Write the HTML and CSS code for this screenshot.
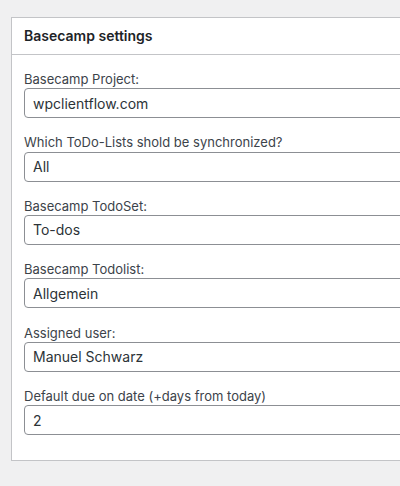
FILE: index.html
```html
<!DOCTYPE html>
<html lang="en">
<head>
<meta charset="utf-8">
<title>Basecamp settings</title>
<link rel="stylesheet" href="styles.css">
</head>
<body>
<div class="wrap">
  <div class="postbox">
    <div class="postbox-header">
      <h2 class="postbox-title">Basecamp settings</h2>
    </div>
    <div class="inside">
      <div class="field">
        <label class="field-label" for="f1">Basecamp Project:</label>
        <input class="field-input" id="f1" type="text" value="wpclientflow.com">
      </div>
      <div class="field">
        <label class="field-label" for="f2">Which ToDo-Lists shold be synchronized?</label>
        <input class="field-input" id="f2" type="text" value="All">
      </div>
      <div class="field">
        <label class="field-label" for="f3">Basecamp TodoSet:</label>
        <input class="field-input" id="f3" type="text" value="To-dos">
      </div>
      <div class="field">
        <label class="field-label" for="f4">Basecamp Todolist:</label>
        <input class="field-input" id="f4" type="text" value="Allgemein">
      </div>
      <div class="field">
        <label class="field-label" for="f5">Assigned user:</label>
        <input class="field-input" id="f5" type="text" value="Manuel Schwarz">
      </div>
      <div class="field">
        <label class="field-label" for="f6">Default due on date (+days from today)</label>
        <input class="field-input" id="f6" type="text" value="2">
      </div>
    </div>
  </div>
</div>
</body>
</html>
```

FILE: styles.css
```css
html, body {
  margin: 0;
  padding: 0;
  overflow: hidden;
  background: #f0f0f1;
  font-family: Inter, "Noto Sans", "Liberation Sans", sans-serif;
}

.wrap {
  padding: 17px 0 0 11px;
  width: 460px;
}

.postbox {
  background: #fff;
  border: 1px solid #c3c4c7;
  box-sizing: border-box;
  width: 440px;
}

.postbox-header {
  height: 36px;
  border-bottom: 1px solid #c3c4c7;
  display: flex;
  align-items: center;
  padding: 0 12px;
}

.postbox-title {
  margin: 0;
  font-size: 14px;
  font-weight: 600;
  color: #1d2327;
  line-height: 1.4;
}

.inside {
  display: flex;
  flex-direction: column;
  gap: 15.2px;
  padding: 15px 12px 25px;
}

.field {
  display: flex;
  flex-direction: column;
}

.field-label {
  font-size: 13px;
  line-height: 18.2px;
  color: #3c434a;
}

.field-input {
  box-sizing: border-box;
  height: 30px;
  width: 100%;
  margin: 0;
  padding: 0 8px;
  border: 1px solid #8c8f94;
  border-radius: 4px;
  background: #fff;
  font-family: inherit;
  font-size: 14px;
  color: #2c3338;
  outline: none;
}
```
